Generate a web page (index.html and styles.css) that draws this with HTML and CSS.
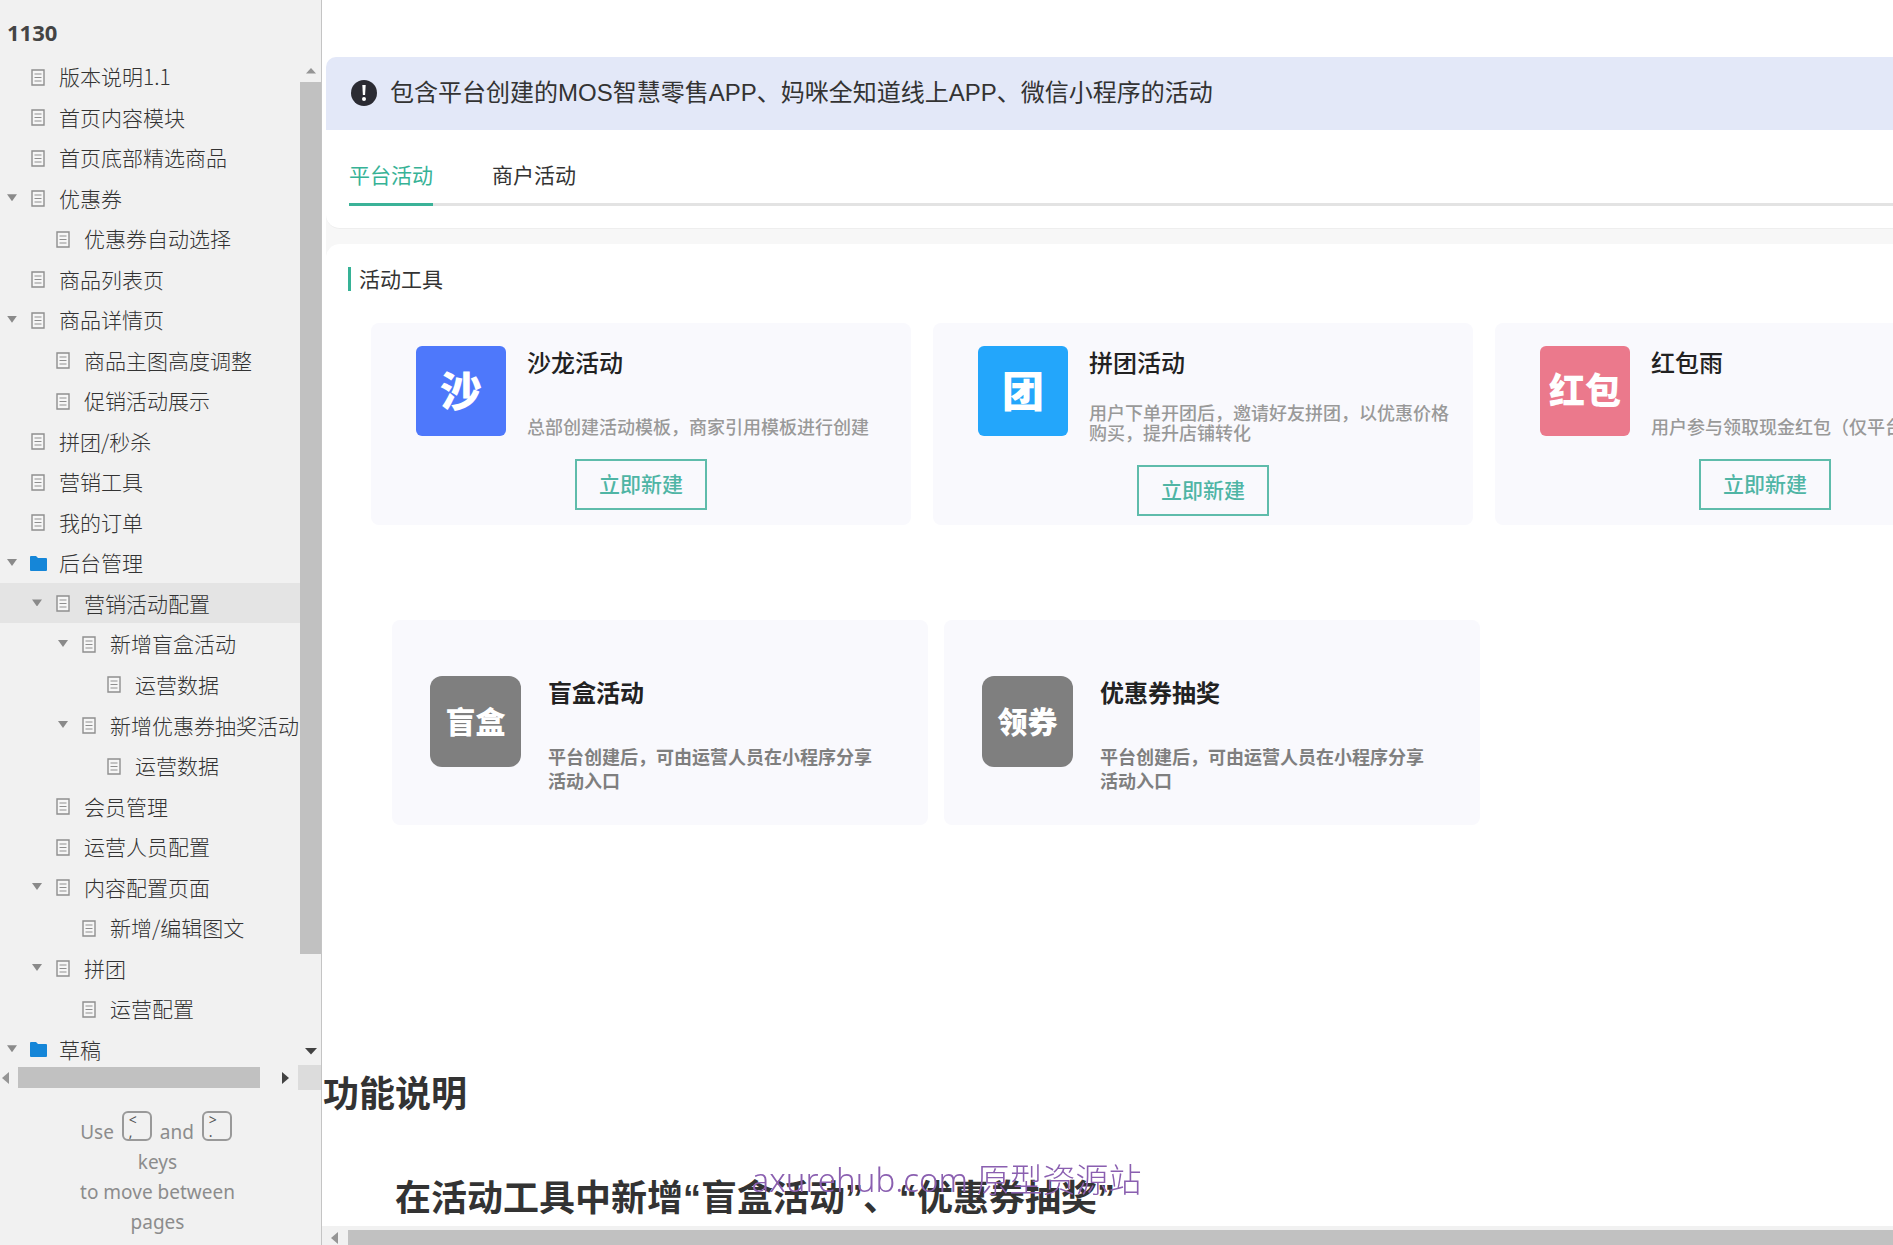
FILE: index.html
```
<!DOCTYPE html>
<html lang="zh-CN">
<head>
<meta charset="utf-8">
<title>1130</title>
<link rel="stylesheet" href="styles.css">
</head>
<body>
<svg class="sprite" aria-hidden="true">
  <symbol id="page" viewBox="0 0 14 17"><path d="M1 1h12v15H1z" fill="#f6f6f6" stroke="#8f8f8f" stroke-width="1.4"/><path d="M3.500 5h7M3.500 8.500h7M3.500 12h7" stroke="#8f8f8f" stroke-width="1.200"/></symbol>
  <symbol id="folder" viewBox="0 0 17 15"><path d="M0 1q0-1 1-1h5l2 2h8q1 0 1 1v11q0 1-1 1H1q-1 0-1-1z" fill="#1586d8"/></symbol>
</svg>
<div class="app">
  <aside class="sidebar">
    <h1 class="project">1130</h1>
    <div class="tree-area">
      <ul class="tree">
        <li><a href="#" class="node"><span class="caret"></span><svg class="ico"><use href="#page"/></svg>版本说明1.1</a></li>
        <li><a href="#" class="node"><span class="caret"></span><svg class="ico"><use href="#page"/></svg>首页内容模块</a></li>
        <li><a href="#" class="node"><span class="caret"></span><svg class="ico"><use href="#page"/></svg>首页底部精选商品</a></li>
        <li><a href="#" class="node"><span class="caret open"></span><svg class="ico"><use href="#page"/></svg>优惠券</a></li>
        <li><a href="#" class="node l1"><span class="caret"></span><svg class="ico"><use href="#page"/></svg>优惠券自动选择</a></li>
        <li><a href="#" class="node"><span class="caret"></span><svg class="ico"><use href="#page"/></svg>商品列表页</a></li>
        <li><a href="#" class="node"><span class="caret open"></span><svg class="ico"><use href="#page"/></svg>商品详情页</a></li>
        <li><a href="#" class="node l1"><span class="caret"></span><svg class="ico"><use href="#page"/></svg>商品主图高度调整</a></li>
        <li><a href="#" class="node l1"><span class="caret"></span><svg class="ico"><use href="#page"/></svg>促销活动展示</a></li>
        <li><a href="#" class="node"><span class="caret"></span><svg class="ico"><use href="#page"/></svg>拼团/秒杀</a></li>
        <li><a href="#" class="node"><span class="caret"></span><svg class="ico"><use href="#page"/></svg>营销工具</a></li>
        <li><a href="#" class="node"><span class="caret"></span><svg class="ico"><use href="#page"/></svg>我的订单</a></li>
        <li><a href="#" class="node"><span class="caret open"></span><svg class="ico dir"><use href="#folder"/></svg>后台管理</a></li>
        <li><a href="#" class="node l1 current"><span class="caret open"></span><svg class="ico"><use href="#page"/></svg>营销活动配置</a></li>
        <li><a href="#" class="node l2"><span class="caret open"></span><svg class="ico"><use href="#page"/></svg>新增盲盒活动</a></li>
        <li><a href="#" class="node l3"><span class="caret"></span><svg class="ico"><use href="#page"/></svg>运营数据</a></li>
        <li><a href="#" class="node l2"><span class="caret open"></span><svg class="ico"><use href="#page"/></svg>新增优惠券抽奖活动</a></li>
        <li><a href="#" class="node l3"><span class="caret"></span><svg class="ico"><use href="#page"/></svg>运营数据</a></li>
        <li><a href="#" class="node l1"><span class="caret"></span><svg class="ico"><use href="#page"/></svg>会员管理</a></li>
        <li><a href="#" class="node l1"><span class="caret"></span><svg class="ico"><use href="#page"/></svg>运营人员配置</a></li>
        <li><a href="#" class="node l1"><span class="caret open"></span><svg class="ico"><use href="#page"/></svg>内容配置页面</a></li>
        <li><a href="#" class="node l2"><span class="caret"></span><svg class="ico"><use href="#page"/></svg>新增/编辑图文</a></li>
        <li><a href="#" class="node l1"><span class="caret open"></span><svg class="ico"><use href="#page"/></svg>拼团</a></li>
        <li><a href="#" class="node l2"><span class="caret"></span><svg class="ico"><use href="#page"/></svg>运营配置</a></li>
        <li><a href="#" class="node"><span class="caret open"></span><svg class="ico dir"><use href="#folder"/></svg>草稿</a></li>
      </ul>
      <div class="vbar">
        <svg width="12" height="7" viewBox="0 0 12 7"><path d="M1 6.500L6 1l5 5.500z" fill="#959595"/></svg>
        <div class="vtrack"><div class="vthumb"></div></div>
        <svg width="12" height="7" viewBox="0 0 12 7"><path d="M0 0h12L6 6.500z" fill="#424242"/></svg>
      </div>
    </div>
    <div class="hbar">
      <svg width="7" height="12" viewBox="0 0 7 12"><path d="M7 0v12L0 6z" fill="#959595"/></svg>
      <div class="htrack"><div class="hthumb"></div></div>
      <svg width="7" height="12" viewBox="0 0 7 12"><path d="M0 0v12l7-6z" fill="#424242"/></svg>
      <div class="corner"></div>
    </div>
    <p class="hint">Use <kbd><span>&lt;</span><span>,</span></kbd> and <kbd><span>&gt;</span><span>.</span></kbd><br>keys<br>to move between<br>pages</p>
  </aside>

  <main class="main">
    <div class="canvas">
      <section class="board">
        <div class="notice">
          <svg width="26" height="26" viewBox="0 0 26 26"><circle cx="13" cy="13" r="13" fill="#2b2b33"/><path d="M11.300 5h3.400l-.6 10h-2.200z" fill="#fff"/><circle cx="13" cy="19" r="2" fill="#fff"/></svg>
          <span>包含平台创建的MOS智慧零售APP、妈咪全知道线上APP、微信小程序的活动</span>
        </div>
        <div class="panels">
          <div class="tab-panel">
            <nav class="tabs">
              <a href="#" class="tab active">平台活动</a>
              <a href="#" class="tab">商户活动</a>
            </nav>
          </div>
          <div class="tools">
            <h2 class="section-title">活动工具</h2>
            <div class="cards">
              <article class="card">
                <div class="badge blue">沙</div>
                <div class="info">
                  <h3 class="name">沙龙活动</h3>
                  <p class="desc">总部创建活动模板，商家引用模板进行创建</p>
                  <button type="button" class="create">立即新建</button>
                </div>
              </article>
              <article class="card">
                <div class="badge sky">团</div>
                <div class="info">
                  <h3 class="name">拼团活动</h3>
                  <p class="desc double">用户下单开团后，邀请好友拼团，以优惠价格<br>购买，提升店铺转化</p>
                  <button type="button" class="create">立即新建</button>
                </div>
              </article>
              <article class="card">
                <div class="badge pink">红包</div>
                <div class="info">
                  <h3 class="name">红包雨</h3>
                  <p class="desc">用户参与领取现金红包（仅平台</p>
                  <button type="button" class="create">立即新建</button>
                </div>
              </article>
            </div>
          </div>
        </div>
      </section>
      <section class="extra">
        <article class="card new">
          <div class="badge gray">盲盒</div>
          <div class="info">
            <h3 class="name">盲盒活动</h3>
            <p class="desc">平台创建后，可由运营人员在小程序分享<br>活动入口</p>
          </div>
        </article>
        <article class="card new">
          <div class="badge gray">领券</div>
          <div class="info">
            <h3 class="name">优惠券抽奖</h3>
            <p class="desc">平台创建后，可由运营人员在小程序分享<br>活动入口</p>
          </div>
        </article>
      </section>
      <section class="spec">
        <h2>功能说明</h2>
        <p>在活动工具中新增“盲盒活动”、“优惠券抽奖”</p>
      </section>
    </div>
    <div class="page-scroll">
      <svg width="7" height="12" viewBox="0 0 7 12"><path d="M7 0v12L0 6z" fill="#959595"/></svg>
      <div class="page-thumb"></div>
    </div>
  </main>
</div>
<div class="watermark">axurehub.com 原型资源站</div>
</body>
</html>
```

FILE: styles.css
```
* { box-sizing: border-box; }
body {
  margin: 0;
  overflow: hidden;
  background: #fff;
  color: #333;
  font-family: "Noto Sans", "Noto Sans CJK SC", sans-serif;
}
h1, h2, h3, p, ul { margin: 0; padding: 0; }
a { color: inherit; text-decoration: none; }
.sprite { position: absolute; width: 0; height: 0; }
.app { display: flex; height: 100vh; }

/* Sidebar */
.sidebar {
  flex: none;
  display: flex;
  flex-direction: column;
  width: 322px;
  background: #f1f1f1;
  border-right: 1px solid #c4c4c4;
}
.project {
  flex: none;
  height: 56px;
  padding: 17px 0 0 7px;
  font-size: 22px;
  line-height: 30px;
  color: #444;
}
.tree-area { flex: 1; display: flex; min-height: 0; overflow: hidden; }
.tree {
  flex: 1;
  display: flex;
  flex-direction: column;
  min-width: 0;
  margin-bottom: -4px;
  list-style: none;
  overflow: hidden;
}
.tree li { flex: 1; display: flex; min-height: 0; }
.node {
  flex: 1;
  display: flex;
  align-items: center;
  padding-left: 7px;
  font-family: "Noto Sans CJK SC", sans-serif;
  font-size: 21px;
  font-weight: 300;
  line-height: 30px;
  color: #333;
  white-space: nowrap;
}
.l1 { padding-left: 32px; }
.l2 { padding-left: 58px; }
.l3 { padding-left: 83px; }
.current { background: #e4e4e4; }
.caret { flex: none; width: 10px; height: 7px; margin-right: 14px; }
.caret.open { background: #8a8a8a; clip-path: polygon(0 0, 100% 0, 50% 100%); }
.ico { flex: none; width: 14px; height: 17px; margin: 2px 14px 0 0; }
.ico.dir { width: 17px; height: 15px; margin: 2px 12px 0 -1px; }

.vbar {
  flex: none;
  display: flex;
  flex-direction: column;
  align-items: center;
  width: 21px;
  padding: 11px 0 10px;
}
.vtrack { flex: 1; width: 21px; padding: 8px 0; }
.vthumb { height: 91%; background: #c1c1c1; }
.hbar { flex: none; display: flex; align-items: center; height: 25px; padding-left: 2px; }
.htrack { flex: 1; padding: 0 22px 0 9px; }
.hthumb { height: 21px; background: #c1c1c1; }
.corner { width: 23px; height: 25px; margin-left: 9px; background: #dcdcdc; }

.hint {
  flex: none;
  height: 155px;
  padding: 21px 6px 0 0;
  font-size: 19px;
  line-height: 30px;
  text-align: center;
  color: #8c8c8c;
}
kbd {
  display: inline-flex;
  flex-direction: column;
  width: 30px;
  height: 30px;
  margin: 0 3px;
  padding: 1px 0 0 5px;
  border: 2px solid #999;
  border-radius: 6px;
  font-family: "Noto Sans", sans-serif;
  font-size: 14px;
  line-height: 12px;
  text-align: left;
  vertical-align: 14px;
  color: #555;
}

/* Page canvas */
.main { flex: 1; display: flex; flex-direction: column; min-width: 0; }
.canvas { flex: 1; min-height: 0; overflow: hidden; }
.board { margin: 57px 0 0 4px; }
.notice {
  display: flex;
  align-items: center;
  gap: 13px;
  height: 73px;
  padding: 0 0 2px 25px;
  border-radius: 10px 0 0 0;
  background: #e3e8f8;
  font-family: "Liberation Sans", "Noto Sans CJK SC", sans-serif;
  font-size: 24px;
  line-height: 36px;
  white-space: nowrap;
}
.panels { background: #f7f7f7; }
.tab-panel {
  padding: 30px 0 22px 23px;
  border-bottom: 1px solid #eee;
  border-radius: 0 0 0 14px;
  background: #fff;
}
.tabs { display: flex; gap: 59px; box-shadow: inset 0 -3px 0 #e3e3e3; }
.tab {
  padding-bottom: 13px;
  border-bottom: 3px solid transparent;
  font-size: 21px;
  line-height: 30px;
}
.tab.active { color: #36b296; border-color: #3bb298; }
.tools {
  margin-top: 15px;
  padding: 23px 0 0 22px;
  border-radius: 14px 0 0 0;
  background: #fff;
}
.section-title {
  margin-bottom: 32px;
  padding-left: 8px;
  border-left: 3px solid #36b296;
  font-size: 21px;
  font-weight: 400;
  line-height: 24px;
}
.cards { display: flex; gap: 22px; padding-left: 23px; }
.card {
  flex: none;
  display: flex;
  gap: 21px;
  width: 540px;
  min-height: 202px;
  padding: 23px 0 0 45px;
  border-radius: 8px;
  background: #f9f9fd;
}
.badge {
  flex: none;
  display: flex;
  align-items: center;
  justify-content: center;
  width: 90px;
  height: 90px;
  border-radius: 6px;
  color: #fff;
  font-size: 42px;
  font-weight: 900;
  line-height: 48px;
}
.blue { background: #4e78fb; }
.sky { background: #23a6fb; }
.pink { background: #eb798c; font-size: 36px; }
.gray { width: 91px; height: 91px; border-radius: 12px; background: #7f7f7f; font-size: 30px; }
.info { white-space: nowrap; }
.name { font-size: 24px; font-weight: 500; line-height: 34px; color: #222; }
.desc { margin: 37px 0 22px; font-size: 18px; font-weight: 500; line-height: 20px; color: #999; }
.desc.double { margin-top: 23px; }
.create {
  display: block;
  width: 132px;
  height: 51px;
  margin-left: 48px;
  padding: 0 0 4px;
  border: 2px solid #5fbcab;
  background: transparent;
  font-family: inherit;
  font-size: 21px;
  font-weight: 500;
  color: #4fb5a5;
}
.extra { display: flex; gap: 16px; margin: 95px 0 0 70px; }
.new { width: 536px; min-height: 205px; gap: 27px; padding: 56px 0 0 38px; }
.new .name { font-weight: 700; }
.new .desc { margin: 35px 0 0; font-weight: 700; line-height: 24px; color: #7f7f7f; }
.spec {
  margin: 246px 0 0 1px;
  font-family: "Liberation Sans", "Noto Sans CJK SC", sans-serif;
  white-space: nowrap;
}
.spec h2, .spec p { font-size: 36px; font-weight: 700; line-height: 48px; }
.spec p { margin: 56px 0 0 72px; }

.page-scroll {
  flex: none;
  display: flex;
  height: 19px;
  padding: 4px 0 0 9px;
  gap: 10px;
  align-items: center;
  background: #f1f1f1;
}
.page-thumb { flex: 1; height: 15px; background: #c1c1c1; }

.watermark {
  position: fixed;
  left: 0;
  right: 0;
  bottom: 41px;
  font-size: 33px;
  font-weight: 300;
  line-height: 48px;
  text-align: center;
  color: #8a5fb0;
}
```
